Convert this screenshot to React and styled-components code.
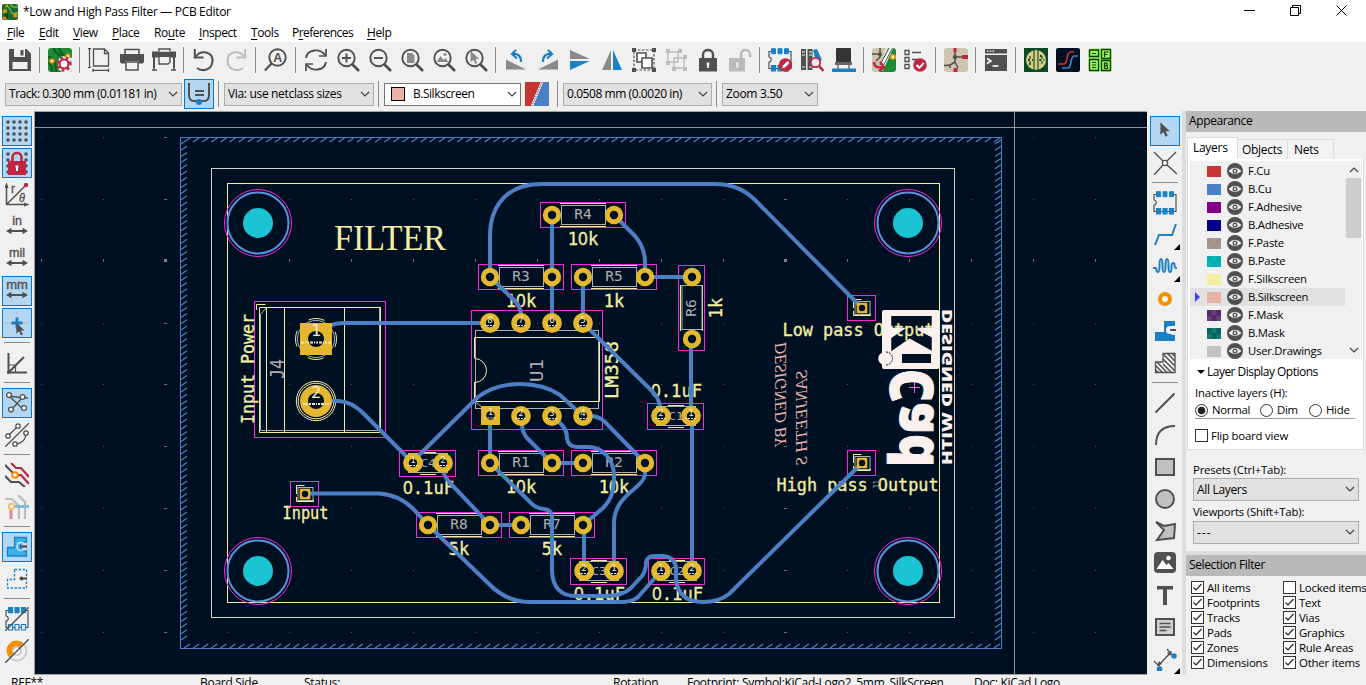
import React from "react";
import styled, { createGlobalStyle, css } from "styled-components";

const Global = createGlobalStyle`
  * { box-sizing: border-box; }
  body { margin: 0; background: #f0f0f0; overflow: hidden; }
  svg { display: block; }
`;

/* ---------- shell ---------- */
const Window = styled.div`
  width: 1366px; height: 685px; display: flex; flex-direction: column; overflow: hidden;
  background: #f0f0f0; color: #000; font: 12px/16px "Open Sans", "Noto Sans", sans-serif;
  letter-spacing: -0.28px; white-space: nowrap;
`;
const TitleBar = styled.header`
  height: 24px; background: #fff; display: flex; align-items: center; padding: 0 19px 0 2px;
  svg { flex: none; }
`;
const Title = styled.span`flex: 1; padding-left: 5px; letter-spacing: -0.32px;`;
const WindowButtons = styled.div`display: flex; gap: 35px; height: 20px; align-items: center; padding-bottom: 3px;`;
const MenuBar = styled.nav`height: 18px; background: #fff; display: flex; gap: 14px; padding: 1px 0 0 7px;`;
const MenuItem = styled.span`
  width: ${(p) => p.$w}px; letter-spacing: ${(p) => p.$ls || -0.4}px;
  u { text-underline-offset: 2px; }
`;
const MainToolbar = styled.div`height: 36px; display: flex; align-items: center; padding-left: 4px;`;
const OptionsToolbar = styled.div`height: 33px; display: flex; align-items: center; padding: 0 0 1px 5px;`;
const Tool = styled.div`
  width: 32px; height: 32px; flex: none; display: flex; align-items: center; justify-content: center;
`;
const ToolFace = styled.div`
  width: 30px; height: 30px; position: relative; display: flex; align-items: center; justify-content: center;
  border: 1px solid ${(p) => (p.$on ? "#0078d7" : "transparent")};
  background: ${(p) => (p.$on ? "#b3d7f3" : "transparent")};
  ${(p) => p.$more && css`&::after {
    content: ""; position: absolute; right: -1px; bottom: -1px;
    border: 3.5px solid transparent; border-right-color: #000; border-bottom-color: #000;
  }`}
`;
const VSep = styled.i`width: 1px; height: 26px; margin: 0 ${(p) => p.$r ?? 4}px 0 ${(p) => p.$l ?? 3}px; background: #8c8c8c; flex: none;`;
const HSep = styled.i`width: 26px; height: 1px; margin: 3px 0 4px; background: #8c8c8c; flex: none;`;
const Combo = styled.div`
  width: ${(p) => p.$w}px; height: 23px; flex: none; display: flex; align-items: center; gap: ${(p) => (p.$white ? 8 : 5)}px;
  padding: 0 3px 0 ${(p) => (p.$white ? 6 : 3)}px; background: ${(p) => (p.$white ? "#fff" : "#e1e1e1")};
  border: 1px solid ${(p) => (p.$white ? "#767676" : "#adadad")}; letter-spacing: ${(p) => p.$ls ?? -0.33}px;
  margin-right: ${(p) => p.$mr || 0}px;
  span { flex: 1; }
`;
const Swatch = styled.i`
  width: 14px; height: ${(p) => (p.$framed ? 14 : 11)}px; flex: none;
  border: ${(p) => (p.$framed ? "1px solid #000" : "0")};
  background: ${(p) => p.$check
    ? `conic-gradient(${p.$check} 25%, ${p.$c} 0 50%, ${p.$check} 0 75%, ${p.$c} 0) 0 0 / 9.4px 11px`
    : p.$c};
`;
const Body = styled.main`height: 564px; flex: none; display: flex;`;
const SideBar = styled.div`
  width: ${(p) => p.$w}px; flex: none; display: flex; flex-direction: column; align-items: center;
  padding: 4px ${(p) => p.$r}px 0 ${(p) => p.$l}px;
`;
const CanvasFrame = styled.section`width: 1113px; height: 564px; flex: none; border: solid #a0a0a0; border-width: 1px 0 1px 1px; background: #001023;`;
const Sash = styled.i`width: 4px; flex: none; background: #dcdcdc;`;
const Panel = styled.aside`width: 180px; display: flex; flex-direction: column; overflow: hidden;`;
const PanelTitle = styled.h2`
  margin: 0; height: 21px; flex: none; background: #b9b9b9; padding: 2px 0 0 3px; font-size: 12px; font-weight: 400;
  letter-spacing: -0.38px;
`;
const Tabs = styled.div`height: 27px; flex: none; display: flex; align-items: flex-end; padding-left: 1px;`;
const Tab = styled.div`
  width: ${(p) => p.$w}px; height: ${(p) => (p.$on ? 22 : 20)}px; padding: 2px 0 0 ${(p) => p.$pl}px;
  border: 1px solid #dcdcdc; border-bottom: 0; ${(p) => (p.$on ? "" : "border-left: 0;")}
  background: ${(p) => (p.$on ? "#fff" : "#f3f3f3")};
`;
const Page = styled.div`
  width: 177px; height: 291px; flex: none; margin-left: 1px; background: #fff; border: 1px solid #dcdcdc; border-top: 0;
  padding: 2px 1px 0 2px; display: flex; flex-direction: column;
`;
const ListBox = styled.div`display: flex; height: 198px; flex: none;`;
const LayerList = styled.div`width: 155px; background: #f0f0f0; overflow: hidden; padding-top: 1px;`;
const LayerRow = styled.div`
  height: 18px; display: flex; align-items: center; padding-left: 5px; letter-spacing: -0.24px;
  background: ${(p) => (p.$on ? "#e1e1e1" : "transparent")};
  > svg { margin-left: 6px; }
  > span { margin-left: 5px; font-size: 11.3px; }
`;
const Marker = styled.i`
  width: 5px; height: 10px; margin-right: 7px; clip-path: polygon(0 0, 100% 50%, 0 100%);
  background: ${(p) => (p.$on ? "#4040ff" : "transparent")};
`;
const ScrollBar = styled.div`
  width: 17px; background: #f0f0f0; display: flex; flex-direction: column; align-items: center; padding: 5px 0;
  justify-content: space-between; position: relative;
`;
const Thumb = styled.i`position: absolute; left: 1px; top: 17px; width: 15px; height: 60px; background: #cdcdcd;`;
const Disclosure = styled.div`height: 24px; display: flex; align-items: center; gap: 2px; padding: 1px 0 0 7px; letter-spacing: -0.52px;
  i { border: 4px solid transparent; border-top-color: #000; border-bottom: 0; width: 0; }`;
const Small = styled.div`
  font-size: 11.4px; height: ${(p) => p.$h || 16}px; line-height: ${(p) => p.$lh || p.$h || 16}px;
  padding-left: ${(p) => p.$pl || 0}px; letter-spacing: -0.2px;
`;
const RadioRow = styled.div`
  display: flex; margin: 0 7px 0 5px; height: 17px; align-items: center; border-bottom: 1px solid #a0a0a0; font-size: 11.4px;
`;
const RadioLabel = styled.label`display: flex; align-items: center; gap: 4px; width: ${(p) => p.$w}px;`;
const Radio = styled.i`
  width: 13px; height: 13px; border: 1px solid #333; border-radius: 50%; background: ${(p) => (p.$on ? "radial-gradient(#222 3.4px, #fff 4.2px)" : "#fff")};
`;
const CheckLabel = styled.label`display: flex; align-items: center; gap: 3px; height: 15px; font-size: 11.4px; letter-spacing: -0.2px;`;
const Box = styled.i`width: 13px; height: 13px; flex: none; border: 1px solid #333; background: #fff;`;
const FlipRow = styled.div`margin: 9px 0 0 5px;`;
const Presets = styled.div`height: 101px; flex: none; padding: 11px 0 0 7px; display: flex; flex-direction: column;`;
const HSash = styled.i`height: 4px; flex: none; background: #dcdcdc;`;
const FilterGrid = styled.div`display: grid; grid-template-columns: 92px 92px; padding: 4px 0 0 5px;`;
const StatusBar = styled.footer`height: 10px; flex: none; padding-left: 11px; display: flex; line-height: 16px;`;
const StatusField = styled.span`width: ${(p) => p.$w}px; flex: none; letter-spacing: ${(p) => p.$ls || -0.28}px;`;

/* ---------- icons ---------- */
const D = "#505050", G = "#8a8a8a", B = "#1a81c4", R = "#bf2641", O = "#f29100";
const Svg = ({ children, s = 24, c = D }) => (
  <svg width={s} height={s} viewBox="0 0 24 24" fill="none" stroke={c} strokeWidth="1.6">{children}</svg>
);
const F = ({ c = D, ...p }) => <path fill={c} stroke="none" {...p} />;
const Lens = ({ children }) => <><circle cx="10.5" cy="10" r="8.200" strokeWidth="1.900" /><path d="M16 16l7 7" strokeWidth="2.600" />{children}</>;
const Cursor = ({ c = G, t = "" }) => <F c={c} d="M8 4v12l3-2.6 2 4.4 2-1-2-4.2h4z" transform={t} />;
const Chevron = ({ up }) => <svg width="10" height="7" viewBox="0 0 10 7" fill="none" stroke="#444" strokeWidth="1.2"><path d={up ? "M1 6l4-4 4 4" : "M1 1l4 4 4-4"} /></svg>;
const Footprint = ({ light }) => (
  <>
    <path d="M3.5 3.5H1v5.500c3 0 3 5 0 5V20.500H23V3.500h-2" strokeWidth="1.200" />
    <path stroke={B} strokeWidth={light ? 1.2 : 1} fill={B} d="M3.500 .7h4v5h-4zM10 .7h4v5h-4zM16.500 .7h4v5h-4z" />
    <path stroke={B} strokeWidth="1.2" fill={light ? "#f0f0f0" : B} d="M3.500 17.500h4v5.500h-4zM10 17.500h4v5.500h-4zM16.500 17.500h4v5.500h-4z" />
  </>
);
const Unit = ({ children, s = 12.5 }) => (
  <Svg><text x="12" y="10" textAnchor="middle" fill={D} stroke={D} strokeWidth=".35" fontSize={s} fontFamily="Liberation Sans, sans-serif" letterSpacing="0">{children}</text>
    <path d="M4 16h16" strokeWidth="2" /><F d="M1 16l5.500-3.200v6.400zM23 16l-5.500-3.200v6.400z" /></Svg>
);
const Padlock = ({ c = D, open }) => (
  <Svg c={c}><path d={open ? "M13 11V6.500c0-6 9-6 9 0V9" : "M7 12V6.500c0-6 10-6 10 0V12"} strokeWidth="2.400" />
    <F c={c} d={open ? "M1 10h16v13.500H1z" : "M3 10h18v13.500H3z"} /><F c="#f0f0f0" d={open ? "M8 14.500h2.600l-.6 5.500H8.500z" : "M10.500 14.500h3l-.7 5.500h-1.600z"} /></Svg>
);
const dots = [3, 9, 15, 21].flatMap((x) => [3, 9, 15, 21].map((y) => [x, y]));
const Dots = () => dots.map(([x, y]) => <circle key={x + "-" + y} cx={x} cy={y} r="1.800" fill={D} stroke="none" />);

const icons = {
  app: <><rect width="24" height="24" rx="3" fill="#1b6a2c" stroke="none" /><path stroke="#4fae4d" strokeWidth="2.500" d="M8 0c0 8 5 5 5 10s4 5 11 3M13 0c0 5 5 5 11 5M0 12c6 0 7 4 7 12" /><F c="#0c3c15" d="M4 14h5v8H4z" /><F c={O} d="M2 8h5v5H2zM17 14h6v6h-6zM5 2h4v3H5zM1 19h5v4H1z" /></>,
  save: <><F d="M1 1h17.500L23 5.500V23H1z" /><F c="#f0f0f0" d="M6 1h11v8H6zM4.500 14h15v7h-15z" /><F d="M12.500 2h3v5.500h-3z" /></>,
  board: <><rect width="24" height="24" rx="3" fill="#1e8a35" stroke="none" /><path stroke="#0b5f1d" strokeWidth="2.200" d="M6 0c0 7 8 5 8 11M11 0c0 4 5 4 5 11M0 9c4 0 8 3 8 15M0 15c3 0 4 3 4 9" /><circle cx="4" cy="13" r="2" fill="#fff" stroke={O} /><circle cx="20" cy="8" r="1.800" fill="#fff" stroke={O} /><F c="#f0f0f0" d="M11 11l3-3 5 1 5 1v11a3 3 0 0 1-3 3h-7l-4-3v-7z" /><circle cx="16" cy="16" r="4.500" stroke={R} strokeWidth="2.200" fill="#fff" /><path stroke={R} strokeWidth="2.400" strokeDasharray="2.700 2.800" d="M22.500 16a6.500 6.500 0 1 0-13 0a6.500 6.500 0 1 0 13 0" /></>,
  page: <><path d="M5.500 1h11l4 4v13h-15zM16.500 1v4.500h4" strokeWidth="1.300" /><path d="M1.500 0v20M0 .7h3M0 19.500h3M5 22.300h16M5 20.500V24M20.500 20.500V24" strokeWidth="1.200" /></>,
  print: <><path d="M5 7V1.500h14V7M6 14h12v8H6z" strokeWidth="1.500" /><F d="M0 6h24v7.500a2 2 0 0 1-2 2h-3.500V13h-13v2.500H2a2 2 0 0 1-2-2z" /></>,
  plot: <><F d="M0 3.500h24v6H0zM1 20V9h2v11zM21 20V9h2v11z" /><path d="M7 3.500V1h11v2.500M7 9v7h9l2-2V9M0 22h5M19 22h5M2 18v4M22 18v4" strokeWidth="1.400" fill="#f0f0f0" /></>,
  undo: <><path d="M4 8.500C8.500 1.500 21 3.500 20.500 13S10 24 5 20" strokeWidth="2.100" /><path d="M2.800 1v8.500h8.700" strokeWidth="2" /></>,
  find: <><circle cx="13.500" cy="9.500" r="8.200" strokeWidth="1.900" /><path d="M7.500 15.500L1 22.500" strokeWidth="2.200" /><text x="13.500" y="14" textAnchor="middle" fontSize="12.500" fontWeight="700" fill={D} stroke="none" fontFamily="Liberation Sans, sans-serif">A</text></>,
  refresh: <><path d="M2 10C3.500 1 16 0 21 7M22 14C20.500 23 8 24 3 17" strokeWidth="1.900" /><path d="M22 1v7h-7M2 23v-7h7" strokeWidth="1.700" /></>,
  zin: <Lens><path d="M6 10h9M10.500 5.500v9" strokeWidth="1.900" /></Lens>,
  zout: <Lens><path d="M6 10h9" strokeWidth="1.900" /></Lens>,
  zpage: <Lens><F c={G} d="M7 5h5l2.500 2.500V15H7z" /></Lens>,
  zobj: <Lens><F c={G} d="M4.500 14l4-6 3 4 2-2 3 4z" /><circle cx="13" cy="6.500" r="1.500" fill={G} stroke="none" /></Lens>,
  zsel: <Lens><Cursor t="translate(-1 -1) scale(.95)" /></Lens>,
  rotl: <><F c={G} d="M2 11.500L22 21.500H2z" /><path stroke={B} strokeWidth="2.200" d="M8 6c6-1 9 2 9 8" /><path stroke={B} strokeWidth="2.200" d="M12 2L8 6l5 4.500" /></>,
  rotr: <><F c={G} d="M22 11.500L2 21.500h20z" /><path stroke={B} strokeWidth="2.200" d="M16 6c-6-1-9 2-9 8" /><path stroke={B} strokeWidth="2.200" d="M12 2l4 4-5 4.500" /></>,
  mirv: <><F c={G} d="M2 2l20 9H2z" /><F c={B} d="M2 22l20-9H2z" /></>,
  mirh: <><F c={G} d="M2 22L11 2v20z" /><F c={B} d="M22 22L13 2v20z" /></>,
  group: <><path d="M2 2h20v20H2z" strokeDasharray="2.500 1.500" strokeWidth="1.200" /><F d="M0 0h4v4H0zM20 0h4v4h-4zM0 20h4v4H0zM20 20h4v4h-4z" /><path fill="#fff" d="M5 5h9v9H5z" /><path fill="#fff" d="M10 10h10v10H10z" /></>,
  ungroup: <g stroke="#bbb"><path d="M4 4h10v10H4zM10 10h10v10H10z" fill="#f0f0f0" strokeWidth="1.400" /><F c="#bbb" d="M2 1h4v4H2zM14 1h4v4h-4zM2 13h4v4H2zM8 19h4v4H8zM19 19h4v4h-4zM19 7h4v4h-4z" /></g>,
  fpedit: <><Footprint /><circle cx="17.500" cy="17" r="6.800" fill={R} stroke="none" /><path d="M14 20.500l1-3 4.500-4.500 2 2-4.500 4.500z" fill="#fff" stroke="none" /></>,
  lib: <><F d="M1 1h5v21H1zM7.500 1h5v21h-5z" /><path stroke="#f0f0f0" strokeWidth="1" d="M2 4h3M2 7h3M9 4h3M9 7h3M2 19h3M9 19h3" /><F c={B} d="M13 2l4-1 5 11-6 2z" /><circle cx="15.500" cy="14.500" r="4.700" fill="#f4e7ef" stroke={R} strokeWidth="1.800" /><path stroke={R} strokeWidth="2.600" d="M19 18l4.500 5" /></>,
  view3d: <><F c="#333" d="M4 1q0-1 1-1h13q1 0 1 1v14H4z" /><F c="#666" d="M3 14h17v3H3z" /><path strokeWidth="1.200" d="M6 17v4M17 17v4" /><F c={B} d="M0 20.500h24V24H0z" /></>,
  update: <><F c="#cfc4ae" d="M3 0h11L7 24H3a3 3 0 0 1-3-3V3a3 3 0 0 1 3-3z" /><F c="#1e8a35" d="M16 0h5a3 3 0 0 1 3 3v18a3 3 0 0 1-3 3H8z" /><path d="M0 6h8M8 0v9l-4 4" /><circle cx="8" cy="6.500" r="2" fill={D} stroke="none" /><path stroke="#fff" strokeWidth="4" d="M19 0L9 22" /><path strokeWidth="1" d="M20 1L10 20M17 0L8 17" /><circle cx="21" cy="9" r="2.200" fill="#fff" stroke={O} /><path stroke={R} strokeWidth="2.500" d="M2 14c0 5 4 6 8 5M8 14l4 5-5 4" /></>,
  drc: <><path strokeWidth="1.300" d="M1 2.500h4v4H1zM1 9.500h4v4H1zM1 16.500h4v4H1zM8 4.500h9M8 11.500h6" /><circle cx="16" cy="17" r="6.800" fill={R} stroke="none" /><path stroke="#fff" strokeWidth="2" d="M12.500 17l2.800 2.800 4.500-5" /></>,
  sch: <><rect width="24" height="24" rx="3" fill="#cfc4ae" stroke="none" /><path strokeWidth="1.500" d="M11 3v6h7M11 9v5l-5 3v3M6 17l-6 .5M11 14l3 6" /><circle cx="11" cy="9" r="2.200" fill={D} stroke="none" /><F c={R} d="M9.500 0h3v4h-3zM18 7h6v4h-6zM9.500 20h4v4h-4z" /></>,
  term: <><F d="M1 1h22v4.500H1zM1 7h22v16H1z" /><path stroke="#fff" strokeWidth="1.500" d="M3 10.500l4 2.500-4 2.500M8.500 18h6" /><path stroke="#fff" strokeWidth="1.200" strokeDasharray="1.500 1.300" d="M3 3.200h8" /></>,
  plug1: <><F c="#0c4a26" d="M0 0h24v24H0z" /><circle cx="12" cy="12" r="10" fill="#d9cb7f" stroke="none" /><path stroke="#0c4a26" strokeWidth="1.100" d="M10 2v20M14 2v20M6 8v3M18 8v3M6 13v3M18 13v3" /><path stroke="#0c4a26" strokeWidth="2" strokeDasharray="1.800 2.200" d="M4 12h5M15.500 12h5M5 16h4M16 8h4" /></>,
  plug2: <><rect width="24" height="24" rx="2" fill="#001023" stroke="none" /><path stroke="#c83434" strokeWidth="1.700" d="M2 16h6c4 0 2-12 6-12h4" /><path stroke="#4d7fc4" strokeWidth="1.700" d="M6 20h6c4 0 2-12 6-12h4" /></>,
  plug3: <><rect x=".5" y=".5" width="23" height="23" rx="3" fill="#92f550" stroke="none" /><g stroke="#123a08" strokeWidth="1.300"><path d="M1.500 2h9v6.500h-9zM1.500 11.500h9v11h-9zM13.500 1.500h9v9h-9zM13.500 12.500h9v10h-9z" /><path d="M4 5.500h4M4 14.500h4M4 17h4M4 19.500h4M16.500 9V4h4M16.500 6.500h3M16.500 20.500v-5.500h2.500v2.700h-2M16.500 20.500h3v-3" strokeWidth="1.200" /></g></>,
  autow: <><path strokeWidth="2" d="M2 1v12q0 6 5 6h10q5 0 5-6V1M8 9h9M8 13h9" /><circle cx="12" cy="20" r="3" fill={B} stroke="none" /></>,
  pair: <><F c="#c83434" d="M0 0h16L6 24H0z" /><F c="#4d7fc4" d="M18 0h6v24H8z" /><path stroke="#fff" strokeWidth="2" d="M17 0L7 24" /><path strokeWidth="1" strokeDasharray="1.500 1" d="M17 0L7 24" /></>,
  grid: <Dots />,
  gridlock: <><Dots /><F c="#b3d7f3" d="M6 0h12v12H6z" /><path stroke={R} strokeWidth="2.600" d="M7.500 11V6.500c0-6 9-6 9 0V11" /><F c={R} d="M3 10h18v14H3z" /><F c="#fff" d="M10.500 14.500h3l-.7 5.500h-1.600z" /></>,
  polar: <><path strokeWidth="1.500" d="M1.500 22V3M1 21.500h20M2 21L20 3" /><F d="M1.500-1l-2 6h4zM25 21.500l-6-2v4z" /><circle cx="21" cy="2" r="2.200" fill={R} stroke="none" /><text x="6" y="10" fontSize="12" fill={D} stroke={D} strokeWidth=".3" fontFamily="Liberation Sans, sans-serif">r</text><text x="14" y="18.500" fontSize="12.500" fontStyle="italic" fill={D} stroke={D} strokeWidth=".3" fontFamily="Liberation Serif, serif">θ</text></>,
  cross: <><path stroke="#b8b8b8" strokeWidth="1" d="M12 0v22M0 12h24" /><path stroke={B} strokeWidth="3" d="M12 6.500v11M6.500 12h11" /><Cursor c={D} t="translate(4 8) scale(.92)" /></>,
  angle: <><path strokeWidth="2" d="M3.500 2v21M2 21.500h20M4 21L19 6" /><path strokeWidth="1.200" d="M4 14h6.500v7" /></>,
  rats: <><path strokeWidth="1.300" d="M4 5l14 13M18 6L6 19M4 5l14 2h5" />{[[4, 4], [17.500, 6], [19, 17], [6, 18.500]].map(([x, y]) => <circle key={x} cx={x} cy={y} r="2.400" fill="#fff" strokeWidth="1.300" />)}</>,
  curved: <><path strokeWidth="1.300" d="M0 24L24 0M3 13L13 3M21 10c0 8-6 11-11 11" />{[[3, 13], [13, 3], [21, 10], [10, 21]].map(([x, y]) => <circle key={x} cx={x} cy={y} r="2.200" fill="#fff" strokeWidth="1.300" />)}</>,
  tracks: <><path strokeWidth="2.200" d="M0 2l9 9M0 13l6 6h8l6 5" /><path stroke={R} strokeWidth="2.200" d="M6 0l5 5h5l8 9M12 12h4l8 9" /><circle cx="10" cy="12" r="2.800" fill="#fff" stroke={O} strokeWidth="2" /></>,
  layersdim: <g opacity=".5"><path stroke={G} strokeWidth="2.200" d="M0 4h7l7 7v13M13 0l7 7v17" /><path stroke={B} strokeWidth="3" d="M9 11.500h15" /><path stroke={R} strokeWidth="3" d="M6 14v10" /><circle cx="6.500" cy="11.500" r="2.800" fill="#fff" stroke={O} strokeWidth="2" /></g>,
  zonefill: <><path stroke={B} strokeWidth="1.300" fill="#39b1ea" d="M9.500 2.500h12v4.500c-8-1-8 10 0 9v5h-19v-8.500h7z" /><circle cx="16" cy="11.500" r="4" stroke="#d5ecfa" strokeWidth="1.500" /><path strokeWidth="2.400" d="M15 11.500h7" /></>,
  zoneout: <><path stroke={B} strokeWidth="1.300" strokeDasharray="2.500 1.500" d="M9.500 2.500h12v18.500h-19v-8.500h7z" /><path strokeWidth="2" d="M16 11.500h6" /><circle cx="16.500" cy="11.500" r="2" fill={D} stroke="none" /></>,
  fpsketch: <><Footprint light /><path strokeWidth="1.400" d="M0 24L24 0" /></>,
  padsketch: <><circle cx="12" cy="12" r="9.500" stroke="#c4c4c4" /><path stroke={O} strokeWidth="6" d="M6.500 16.500A7 7 0 0 1 16.500 6.500" /><circle cx="12" cy="12" r="4" stroke="#c4c4c4" fill="#fff" /><path strokeWidth="1.400" d="M0 24L24 0" /></>,
  select: <Cursor c={D} t="translate(-1 -1) scale(1.050)" />,
  ratsn: <><path strokeWidth="1.400" d="M1 1l9 9M23 1l-9 9M1 24l9-10M14 14l10 9" /><circle cx="12" cy="12" r="2.600" fill="#fff" strokeWidth="1.300" /></>,
  fp: <Footprint />,
  route: <path stroke={B} strokeWidth="2" d="M2 22L6 12h13l4-11" />,
  tune: <path stroke={B} strokeWidth="2" d="M0 13h2c3 0 0 4 3 4s0-13 3-13 0 13 3 13 0-13 3-13 0 13 3 13 0-9 3-9 0 4 3 5h1" />,
  via: <circle cx="12" cy="12" r="5" stroke={O} strokeWidth="4" />,
  zone: <><F c={B} d="M11 2h11v5c-8-2-8 10 0 9v6H2V13h9z" /><circle cx="17" cy="11" r="3.200" fill="#fff" stroke="#f0f0f0" /><path strokeWidth="2" d="M17 11h6" /></>,
  rule: <><path strokeWidth="1.300" d="M10 2.500h12v19H2.500V11H10z" /><path strokeWidth="1.500" d="M10 3l12 12M14.500 2.500L22 10M19 2.500l3 3M10 8l12 12M10 13l8.500 8.500M8 11l-.5 0M4 11l10 10.500M2.500 14.500l7 7M2.500 19l3 2.500" /></>,
  line: <path strokeWidth="2" d="M2.500 21.500l19-19" />,
  arc: <path strokeWidth="2" d="M3 22C3 10 9 3 22 3" />,
  rect: <path strokeWidth="2" fill="#c0c0c0" d="M3 4h18v16H3z" />,
  circle: <circle cx="12" cy="12" r="9" strokeWidth="2" fill="#c0c0c0" />,
  poly: <path strokeWidth="2" fill="#c0c0c0" d="M3 3l8 4 11-2-1 14L4 21l7-10z" />,
  image: <><rect x="1" y="1" width="22" height="21" rx="4" fill={D} stroke="none" /><F c="#fff" d="M3.500 18l6-9 4 5 2-2 5 6z" /><circle cx="15.500" cy="7" r="2.300" fill="#fff" stroke="none" /></>,
  text: <F d="M4 3h16v3.500h-6V22h-4V6.500H4z" />,
  textbox: <><path strokeWidth="2" fill="#d0d0d0" d="M3 4h18v16H3z" /><path strokeWidth="1.400" d="M6.500 8.500h11M6.500 12h11M6.500 15.500h7" /></>,
  dim: <><path strokeWidth="1.300" d="M6 18L18 5M14 2l5 6M1 14l6 6" /><F d="M19 4l-5 2 3 3zM4 19l2-5 3 3z" /><circle cx="21" cy="9" r="2.800" fill={B} stroke="none" /><circle cx="6.500" cy="22" r="2.800" fill={B} stroke="none" /></>,
};
const special = {
  in: <Unit>in</Unit>, mil: <Unit>mil</Unit>, mm: <Unit s={13}>mm</Unit>,
  lock: <Padlock />, unlock: <Padlock c="#bababa" open />,
  redo: <Svg c="#bdbdbd"><g transform="translate(24 0) scale(-1 1)">{icons.undo}</g></Svg>,
};
const Icon = ({ name }) => special[name] || <Svg>{icons[name]}</Svg>;

const ToolButton = ({ name, on, more }) => <Tool><ToolFace $on={on} $more={more}><Icon name={name} /></ToolFace></Tool>;

const mainTools = "save | board | page print plot | undo redo | find | refresh zin zout zpage zobj zsel | rotl rotr mirv mirh group ungroup lock unlock | fpedit lib view3d | update drc | sch | term | plug1 plug2 plug3".split(" ");
const leftTools = "grid* gridlock* polar in mil mm* cross* | angle | rats* curved | tracks layersdim | zonefill* zoneout | fpsketch padsketch".split(" ");
const rightTools = "select* ratsn | fp route+ tune+ via zone rule | line arc rect circle poly image text textbox dim+".split(" ");
const renderTools = (list, Sep) => list.map((t, i) => t === "|" ? <Sep key={i} /> :
  <ToolButton key={i} name={t.replace(/[*+]/, "")} on={t.endsWith("*")} more={t.endsWith("+")} />);

/* ---------- board canvas ---------- */
const C = { silk: "#f2eda1", cu: "#4d7fc4", gold: "#e3b82e", crt: "#ff26e2", fab: "#afafaf", bg: "#001023", back: "#faf0ee", pink: "#e8b2a7" };
const BoardSvg = styled.svg`letter-spacing: 0;`;
const Stroke = styled.text`
  font-family: "DejaVu Sans Mono", monospace; font-size: ${(p) => p.$s || 18}px; fill: ${(p) => p.$c || C.silk}; white-space: pre;
  stroke: ${(p) => (p.$c ? "none" : C.silk)}; stroke-width: 0.35px;
  tspan { font-family: "Noto Sans", sans-serif; }
`;
const Serif = styled.text`font-family: "Liberation Serif", serif; fill: ${C.silk}; font-size: 35px;`;
const BackSerif = styled.text`font-family: "Liberation Serif", serif; font-style: italic; fill: ${C.pink}; font-size: 16.5px;`;
const LogoText = styled.text`font-family: "Open Sans", sans-serif; font-weight: 800; fill: ${(p) => p.$c || C.back};`;

const Label = ({ x, y, t, w, rot, s, c, mid }) => {
  const len = w || t.length * 10.15;
  const zero = t.indexOf("0");
  const at = mid ? -len / 2 : 0;
  return (
    <Stroke $s={s} $c={c} transform={`translate(${x} ${y})${rot ? " rotate(-90)" : ""}`} x={at} textLength={len} lengthAdjust="spacingAndGlyphs">
      {zero < 0 ? t : <>{t.slice(0, zero)}<tspan>0</tspan>{t.slice(zero + 1)}</>}
    </Stroke>
  );
};
const Pad = ({ x, y, r = 9.2, h = 4.2, sq, n }) => (
  <g>
    {sq ? <rect x={x - r} y={y - r} width={r * 2} height={r * 2} fill={C.gold} /> : <circle cx={x} cy={y} r={r} fill={C.gold} />}
    <circle cx={x} cy={y} r={h} fill={C.bg} />
    {n && <><Stroke $s={9} $c="#f3ead0" x={x} y={y - 0.5} textAnchor="middle">{n}</Stroke>
      <path d={`M${x - 6} ${y + 2.500}h12`} stroke="#eee3c0" strokeWidth="1" strokeDasharray="2 1" /></>}
  </g>
);
const Courtyard = ({ x1, y1, x2, y2 }) => <rect x={x1} y={y1} width={x2 - x1} height={y2 - y1} fill="none" stroke={C.crt} />;
const Resistor = ({ x, y, name, value }) => (
  <g fill="none">
    <Courtyard x1={x - 11.5} y1={y - 12.5} x2={x + 73.5} y2={y + 12.5} />
    <path stroke={C.silk} d={`M${x + 8} ${y - 11.500}h46M${x + 8} ${y + 11.500}h46`} />
    <rect x={x + 9.5} y={y - 9.5} width="44" height="19" stroke={C.fab} />
    <Label x={x + 31} y={y + 4} t={name} w={17.5} s={13.5} c={C.fab} mid />
    <Label x={x + 31} y={y + 29.5} t={value} mid />
  </g>
);
const Capacitor = ({ x, y, name, vy }) => (
  <g fill="none">
    <Courtyard x1={x - 13.5} y1={y - 12.5} x2={x + 42.5} y2={y + 13.5} />
    <path stroke={C.silk} d={`M${x + 7} ${y - 10.500}h16M${x + 7} ${y + 11.500}h16`} />
    <rect x={x - 4.5} y={y - 9.5} width="39" height="19" stroke={C.fab} />
    <Label x={x + 15} y={y + 4} t={name} w={15} s={11} c={C.fab} mid />
    <Label x={x - 10} y={y + vy} t="0.1uF" w={51} />
  </g>
);
const Header = ({ x, y, top = 12.5 }) => (
  <g fill="none">
    <Courtyard x1={x - 14.5} y1={y - top} x2={x + 13.5} y2={y + 12.5} />
    <path stroke={C.silk} d={`M${x - 8.500} ${y}V${y - 8.500}h8M${x - 8.500} ${y + 3}v4.500h17v-2`} />
    <rect x={x - 7} y={y - 6.5} width="15" height="13" stroke={C.fab} />
  </g>
);

const tracks = [
  "M316 339L332 325Q336 323 345 323H490",
  "M316 401H339Q352 402 363 413L412 462L478 397Q496 384 520 384T560 395L583 416",
  "M490 277V236C490 205 508 184 541 184H714C735 184 747 191 759 204L862 308",
  "M552 215V323", "M614 215L635 236Q645 248 645 262V277H692",
  "M490 277L514 300Q521 307 521 315V323", "M583 277V323",
  "M583 323L653 392Q661 400 661 416", "M691 339V416", "M692 416V571",
  "M490 416V463", "M522 416V424Q522 432 527 438L552 463H583",
  "M552 416L561 424Q567 430 567 438Q568 447 577 447H588C603 447 614 460 614 476C614 490 612 499 603 508L583 525",
  "M583 416H590Q598 416 604 421L645 463",
  "M645 463V475Q644 481 633 490C622 499 614 508 614 524V571",
  "M490 463L529 501Q536 509 544 509Q552 510 552 517V571Q553 596 576 596H607Q622 596 631 588L642 576Q646 571 646 562Q648 556 654 556H663Q675 557 676 568V580Q679 602 703 602Q719 602 729 594L862 463",
  "M428 525L488 583Q506 602 530 602H622Q632 602 638 597L661 571",
  "M305 493.500H379Q402 495 417 513L428 525",
  "M443 463V471Q445 478 452 485L490 525H521", "M584 525V571",
];

const gridDots = () => {
  const out = [];
  for (let i = 0; i < 18; i++) for (let j = 0; j < 9; j++) {
    const x = 41 + i * 62, y = Math.floor(137.3 + j * 61.9), mx = i === 2 || i === 12, my = j === 2;
    out.push(<rect key={i + "." + j} x={mx ? x - 1 : x} y={my ? y - 2 : y} width={mx ? 3 : 1} height={my ? 3 : 1} fill={mx && my ? "#858585" : mx || my ? "#66707a" : "#4a545f"} />);
  }
  return out;
};
const hatch = () => {
  let d = "";
  for (let y = 144; y < 646; y += 6.2) d += `M181 ${y}l6-4M995 ${y}l6-4`;
  for (let x = 184; x < 996; x += 9.1) d += `M${x} 142l6-4M${x} 648l6-4`;
  return d;
};

const Board = () => (
  <BoardSvg width="1112" height="562" viewBox="35 112 1112 562">
    {gridDots()}
    <path d="M35 127.500H1147M1014.500 112V674" stroke="#8f959a" />
    <path d={hatch()} stroke={C.cu} strokeWidth="1.200" fill="none" />
    <rect x="180.5" y="137.5" width="821" height="511" fill="none" stroke={C.cu} />
    <rect x="211.5" y="168.500" width="743" height="449" fill="none" stroke="#d0d2cd" />
    <rect x="227.500" y="183.500" width="712" height="419" fill="none" stroke={C.silk} />

    {[[258, 223], [908, 223], [258, 571], [908, 571]].map(([x, y]) => (
      <g key={x + "," + y} fill="none">
        <circle cx={x} cy={y} r="33.500" stroke={C.crt} />
        <circle cx={x} cy={y} r="30.500" stroke="#5a90dc" strokeWidth="2" />
        <circle cx={x} cy={y} r="15" fill="#1ac4d2" />
      </g>
    ))}

    <Serif x="334" y="250" textLength="112" lengthAdjust="spacingAndGlyphs">FILTER</Serif>

    {/* J4 terminal block */}
    <g fill="none">
      <path stroke={C.fab} d="M260.500 430.500H379.500V308M260.500 314v116M261 314l5-6" />
      <path stroke={C.silk} d="M259.500 307.500h121v125h-121zM266.500 307.500v125M284.500 307.500v125M344.500 307.500v125M256.500 310v-5.500h9" />
      <Courtyard x1={254.5} y1={301.5} x2={385.5} y2={437.5} />
      <circle cx="316" cy="339" r="20.500" stroke={C.silk} strokeDasharray="16 16.200" strokeDashoffset="8" />
      <circle cx="316" cy="339" r="18.500" stroke={C.fab} />
      <circle cx="316" cy="401" r="19.700" stroke={C.silk} />
      <circle cx="316" cy="401" r="17.800" stroke={C.silk} />
      <Label x={284} y={379} t="J4" rot w={20} s={19} c={C.fab} />
      <Label x={254} y={424} t="Input Power" rot w={110} />
    </g>

    {/* U1 dual op-amp */}
    <g fill="none">
      <rect x="475.500" y="330.500" width="123" height="78" stroke={C.fab} />
      <path stroke={C.silk} d="M474.500 358V337.500h125v64h-125V382M474.500 358.500a12 12 0 0 1 0 24" />
      <path stroke={C.fab} d="M475.500 402l8 6M475.500 358v24" />
      <Courtyard x1={471.5} y1={310.5} x2={602.5} y2={429.5} />
      <Label x={543} y={382} t="U1" rot w={23} s={18.5} c={C.fab} />
      <Label x={618} y={399} t="LM358" rot w={58} />
    </g>

    <Resistor x={552} y={215} name="R4" value="10k" />
    <Resistor x={490} y={277} name="R3" value="10k" />
    <Resistor x={583} y={277} name="R5" value="1k" />
    <Resistor x={490} y={463} name="R1" value="10k" />
    <Resistor x={583} y={463} name="R2" value="10k" />
    <Resistor x={428} y={525} name="R8" value="5k" />
    <Resistor x={521} y={525} name="R7" value="5k" />
    <g fill="none">
      <Courtyard x1={678.5} y1={265.5} x2={704.5} y2={350.5} />
      <path stroke={C.silk} d="M680.500 285v46M702.500 285v46" />
      <rect x="682" y="285.500" width="20" height="44" stroke={C.fab} />
      <Label x={696} y={308} t="R6" rot w={17.5} s={13.5} c={C.fab} mid />
      <Label x={721.5} y={308} t="1k" rot mid />
    </g>
    <Capacitor x={661} y={416} name="C1" vy={-19} />
    <Capacitor x={413} y={463} name="C4" vy={30.5} />
    <Capacitor x={584} y={571} name="C3" vy={28.5} />
    <Capacitor x={662} y={571} name="C2" vy={28.5} />

    <Header x={862} y={308} />
    <Header x={862} y={463} />
    <Header x={305} y={494} />
    <Label x={782.5} y={336} t="Low pass Output" w={152} />
    <Label x={776.5} y={491} t="High pass Output" w={162} />
    <Label x={282.5} y={518.5} t="Input" w={46} />
    <Label x={880} y={489} t="J1" rot w={9} s={9} c={C.fab} />

    <g fill="none" stroke={C.cu} strokeWidth="4" strokeLinejoin="round">{tracks.map((d) => <path key={d} d={d} />)}</g>

    <Pad x={316} y={339} r={16} h={8} sq />
    <Pad x={316} y={401} r={16} h={8} />
    <Label x={316} y={336} t="1" s={15} c="#f3ead0" mid />
    <Label x={316} y={398} t="2" s={15} c="#f3ead0" mid />
    <path d="M301 342.500h30M303 404h28" stroke="#efe6c8" strokeWidth="2" strokeDasharray="3 1 1 1 2 1" />
    {[[552, 215], [614, 215], [490, 277], [552, 277], [583, 277], [645, 277], [692, 277], [692, 339],
      [490, 463], [552, 463], [583, 463], [645, 463], [428, 525], [490, 525], [521, 525], [583, 525]].map(([x, y]) => <Pad key={x + "," + y} x={x} y={y} />)}
    {[[490, 323, 8], [521, 323, 7], [552, 323, 6], [583, 323, 5], [521, 416, 2], [552, 416, 3], [583, 416, 4],
      [661, 416, 2], [691, 416, 1], [413, 463, 1], [443, 463, 2], [584, 571, 2], [614, 571, 1], [661, 571, 1], [692, 571, 2]]
      .map(([x, y, n]) => <Pad key={x + "," + y} x={x} y={y} r={9.9} n={n} />)}
    <Pad x={490.5} y={415.5} r={9.5} sq n={1} />
    {[[862, 308], [862, 463], [305, 494]].map(([x, y]) => <Pad key={x + "," + y} x={x} y={y} r={5.3} h={3.2} sq />)}

    {/* mirrored back silkscreen: reads top to bottom, letter tops to the left */}
    <BackSerif transform="matrix(0 1 1 0 786 342)" textLength="104" lengthAdjust="spacingAndGlyphs">DESIGNED BY</BackSerif>
    <BackSerif transform="matrix(0 1 1 0 807 370)" textLength="95" lengthAdjust="spacingAndGlyphs">SANJEETH S</BackSerif>
    {/* the K and i are cut out of the badge, so the front silkscreen shows through */}
    <mask id="badge" maskUnits="userSpaceOnUse" x="875" y="300" width="70" height="75">
      <rect x="875" y="300" width="70" height="75" fill="#fff" />
      <LogoText $c="#000" stroke="#000" strokeWidth="1.500" fontSize="54" transform="matrix(0 1 1 0 930.500 312.500)" textLength="37" lengthAdjust="spacingAndGlyphs">K</LogoText>
      <rect x="902" y="354" width="29" height="9" fill="#000" />
    </mask>
    <rect x="882" y="310" width="57.500" height="59" rx="2" fill={C.back} mask="url(#badge)" />
    <circle cx="884.500" cy="358.500" r="6.300" fill={C.back} />
    <path d="M886 352a6.500 6.500 0 0 1 0 13" fill="none" stroke={C.bg} strokeDasharray="2 1" />
    <LogoText fontSize="61" stroke={C.back} strokeWidth="1" transform="matrix(0 1 1 0 932.500 369)" textLength="98" lengthAdjust="spacingAndGlyphs">Cad</LogoText>
    <LogoText fontSize="14.300" transform="matrix(0 1 1 0 952 309)" textLength="156" lengthAdjust="spacingAndGlyphs">DESIGNED WITH</LogoText>
    <path d="M909 387.500h11M914.500 382v11" stroke="#ff66e6" />
  </BoardSvg>
);

/* ---------- side panel ---------- */
const layers = [
  ["F.Cu", "#c83434"], ["B.Cu", "#4d7fc4"], ["F.Adhesive", "#840084"], ["B.Adhesive", "#000084"],
  ["F.Paste", "#a39089", "#a8968f"], ["B.Paste", "#00adad", "#0cb5b5"], ["F.Silkscreen", "#f2eda1"], ["B.Silkscreen", "#e8b2a7"],
  ["F.Mask", "#542868", "#6b3f7e"], ["B.Mask", "#02645c", "#187b73"], ["User.Drawings", "#c2c2c2"],
];
const Eye = () => (
  <svg width="16" height="16" viewBox="0 0 16 16"><circle cx="8" cy="8" r="8" fill={D} />
    <path d="M1.500 8Q8 1.500 14.500 8Q8 14.500 1.500 8z" fill="#f0f0f0" /><circle cx="8" cy="8" r="2.500" fill={D} /><circle cx="8" cy="8" r="1.200" fill="#e8e8e8" /></svg>
);
const Check = ({ on, children }) => (
  <CheckLabel><Box>{on ? <svg width="11" height="11" viewBox="0 0 11 11" fill="none" stroke="#222" strokeWidth="1.200"><path d="M1.500 5.500L4 8l5.500-6" /></svg> : null}</Box>{children}</CheckLabel>
);
const filters = [["All items", 1], ["Locked items", 0], ["Footprints", 1], ["Text", 1], ["Tracks", 1], ["Vias", 1], ["Pads", 1], ["Graphics", 1], ["Zones", 1], ["Rule Areas", 1], ["Dimensions", 1], ["Other items", 1]];
const menus = [["", "F", "ile", 18], ["", "E", "dit", 20], ["", "V", "iew", 25], ["", "P", "lace", 28], ["Ro", "u", "te", 31], ["", "I", "nspect", 38], ["", "T", "ools", 27], ["P", "r", "eferences", 61], ["", "H", "elp", 25]];

const SidePanel = () => (
  <Panel>
    <PanelTitle>Appearance</PanelTitle>
    <Tabs><Tab $on $w={51} $pl={5}>Layers</Tab><Tab $w={50} $pl={4}>Objects</Tab><Tab $w={46} $pl={6}>Nets</Tab></Tabs>
    <Page>
      <ListBox>
        <LayerList>{layers.map(([n, c, k]) => <LayerRow key={n} $on={n === "B.Silkscreen"}><Marker $on={n === "B.Silkscreen"} /><Swatch $c={c} $check={k} /><Eye /><span>{n}</span></LayerRow>)}</LayerList>
        <ScrollBar><Chevron up /><Thumb /><Chevron /></ScrollBar>
      </ListBox>
      <Disclosure><i />Layer Display Options</Disclosure>
      <Small $pl={5} $h={19}>Inactive layers (H):</Small>
      <RadioRow>
        <RadioLabel $w={65}><Radio $on />Normal</RadioLabel><RadioLabel $w={49}><Radio />Dim</RadioLabel><RadioLabel><Radio />Hide</RadioLabel>
      </RadioRow>
      <FlipRow><Check>Flip board view</Check></FlipRow>
    </Page>
    <Presets>
      <Small $h={17}>Presets (Ctrl+Tab):</Small>
      <Combo $w={166}><span>All Layers</span><Chevron /></Combo>
      <Small $h={20} $lh={22}>Viewports (Shift+Tab):</Small>
      <Combo $w={166} $ls={1}><span>---</span><Chevron /></Combo>
    </Presets>
    <HSash />
    <PanelTitle>Selection Filter</PanelTitle>
    <FilterGrid>{filters.map(([t, on]) => <Check key={t} on={on}>{t}</Check>)}</FilterGrid>
  </Panel>
);

export default function App() {
  return (
    <Window>
      <Global />
      <TitleBar>
        <Svg s={16}>{icons.app}</Svg>
        <Title>*Low and High Pass Filter — PCB Editor</Title>
        <WindowButtons>
          <svg width="11" height="11" stroke="#000"><path d="M0 5.500h11" /></svg>
          <svg width="11" height="11" fill="none" stroke="#000"><path d="M.5 2.500h8v8h-8zM2.500 2.500v-2h8v8h-2" /></svg>
          <svg width="11" height="11" stroke="#000"><path d="M.5 .5l10 10M10.500 .5l-10 10" /></svg>
        </WindowButtons>
      </TitleBar>
      <MenuBar>{menus.map(([a, u, b, w]) => <MenuItem key={u + b} $w={w} $ls={w === 61 ? -0.52 : 0}>{a}<u>{u}</u>{b}</MenuItem>)}</MenuBar>
      <MainToolbar>{renderTools(mainTools, VSep)}</MainToolbar>
      <OptionsToolbar>
        <Combo $w={177} $mr={1} $ls={-0.47}><span>Track: 0.300 mm (0.01181 in)</span><Chevron /></Combo>
        <Tool><ToolFace $on><Icon name="autow" /></ToolFace></Tool>
        <VSep $l={3} $r={5} />
        <Combo $w={150}><span>Via: use netclass sizes</span><Chevron /></Combo>
        <VSep $l={4} $r={5} />
        <Combo $w={137} $white $ls={-0.48}><Swatch $framed $c="#e8b2a7" /><span>B.Silkscreen</span><Chevron /></Combo>
        <Tool><Icon name="pair" /></Tool>
        <VSep $l={4} $r={5} />
        <Combo $w={149} $ls={-0.43}><span>0.0508 mm (0.0020 in)</span><Chevron /></Combo>
        <VSep $l={4} $r={5} />
        <Combo $w={96}><span>Zoom 3.50</span><Chevron /></Combo>
      </OptionsToolbar>
      <Body>
        <SideBar $w={34} $l={0} $r={0}>{renderTools(leftTools, HSep)}</SideBar>
        <CanvasFrame><Board /></CanvasFrame>
        <SideBar $w={35} $l={2} $r={1}>{renderTools(rightTools, HSep)}</SideBar>
        <Sash />
        <SidePanel />
      </Body>
      <StatusBar>
        <StatusField $w={189}>REF**</StatusField><StatusField $w={104}>Board Side</StatusField><StatusField $w={309}>Status:</StatusField>
        <StatusField $w={74}>Rotation</StatusField><StatusField $w={287}>Footprint: Symbol:KiCad-Logo2_5mm_SilkScreen</StatusField><StatusField $w={100}>Doc: KiCad Logo</StatusField>
      </StatusBar>
    </Window>
  );
}
